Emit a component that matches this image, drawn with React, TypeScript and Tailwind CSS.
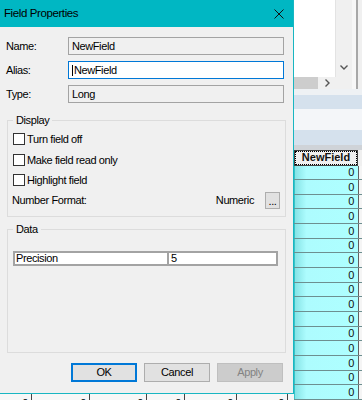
import React from "react";

const font = "font-['Liberation_Sans',Arial,sans-serif] text-[11px] tracking-[-0.4px] text-black";

const Checkbox = ({ label }: { label: string }) => (
  <div className="flex h-[20.5px] items-center">
    <div className="h-[12px] w-[12px] border border-[#333333] bg-white" />
    <span className="ml-[2px]">{label}</span>
  </div>
);

const FieldRow = ({ label, value, active }: { label: string; value: string; active?: boolean }) => (
  <div className="flex h-[18px] items-center">
    <div className="w-[68px] pl-[6px]">{label}</div>
    <div
      className={
        "flex h-[18px] w-[216px] items-center pl-[3px] " +
        (active ? "border border-[#0078d7] bg-white" : "border border-[#a3a3a3] bg-[#f0f0f0]")
      }
    >
      {active && <span className="mr-[1px] h-[11px] w-px bg-black" />}
      <span>{value}</span>
    </div>
  </div>
);

const rows = Array.from({ length: 16 });
const bottomCells = [32, 58, 57, 38, 52, 51];

export default function App() {
  return (
    <div className={"flex h-[400px] w-[362px] overflow-hidden bg-[#f0f0f0] " + font}>
      {/* left: dialog + table strip beneath */}
      <div className="flex w-[294px] flex-col">
        <div className="flex h-[394px] flex-col border-r border-b border-[#19b6c2] bg-[#f0f0f0]">
          <div className="flex h-[27px] shrink-0 items-center justify-between bg-[#00b7c3] pl-[4px] pr-[9px]">
            <span className="text-[11.5px]">Field Properties</span>
            <svg width="10" height="10" viewBox="0 0 10 10" aria-hidden>
              <path d="M0.5 0.5 L9.5 9.5 M9.5 0.5 L0.5 9.5" stroke="#111" strokeWidth="1" />
            </svg>
          </div>

          <div className="mt-[10px] flex flex-col gap-[6px]">
            <FieldRow label="Name:" value="NewField" />
            <FieldRow label="Alias:" value="NewField" active />
            <FieldRow label="Type:" value="Long" />
          </div>

          <fieldset className="mx-[7px] mt-[11px] border border-[#dcdcdc] px-[5px] pb-[7px]">
            <legend className="px-[3px] leading-[12px]">Display</legend>
            <div className="pt-[3px]">
              <Checkbox label="Turn field off" />
              <Checkbox label="Make field read only" />
              <Checkbox label="Highlight field" />
              <div className="mt-[1.5px] flex h-[17px] items-center">
                <span className="-ml-[1px] flex-1">Number Format:</span>
                <span className="mr-[11px]">Numeric</span>
                <div className="flex h-[17px] w-[15px] items-end justify-center border border-[#adadad] bg-[#e1e1e1] pb-[2px] leading-[10px]">
                  ...
                </div>
              </div>
            </div>
          </fieldset>

          <fieldset className="mx-[7px] mt-[6px] border border-[#dcdcdc] px-[5px] pb-[86px]">
            <legend className="px-[3px] leading-[12px]">Data</legend>
            <div className="mr-[2px] mt-[16px] flex h-[15px] border-2 border-[#a3a3a3] bg-white leading-[11px]">
              <div className="flex w-[154px] items-center border-r-2 border-[#a3a3a3] pl-[1px]">Precision</div>
              <div className="flex flex-1 items-center pl-[2px]">5</div>
            </div>
          </fieldset>

          <div className="mt-[10px] flex justify-end gap-[7px] pr-[10px]">
            <button className="flex h-[19px] w-[66px] items-center justify-center border-2 border-[#0078d7] bg-[#e1e1e1]">
              OK
            </button>
            <button className="flex h-[19px] w-[66px] items-center justify-center border border-[#adadad] bg-[#e1e1e1]">
              Cancel
            </button>
            <button className="flex h-[19px] w-[66px] items-center justify-center border border-[#bfbfbf] bg-[#cccccc] text-[#838383]">
              Apply
            </button>
          </div>
        </div>

        <div className="flex h-[6px] overflow-hidden bg-[#f7f7f7]">
          {bottomCells.map((w, i) => (
            <div key={i} className="flex justify-end border-r border-[#444444] pr-[3px] pt-[2px] leading-[14px]" style={{ width: w }}>
              0
            </div>
          ))}
          <div className="flex-1" />
        </div>
      </div>

      {/* right: attribute table behind the dialog */}
      <div className="flex w-[68px] flex-col bg-[#f0f0f0]">
        <div className="flex h-[89px]">
          <div className="flex w-[58px] flex-col">
            <div className="flex h-[77px]">
              <div className="w-[42px] border-r border-[#e3e3e3] bg-white" />
              <div className="flex w-[16px] items-end justify-center pb-[7px]">
                <svg width="8" height="5" viewBox="0 0 8 5" aria-hidden>
                  <path d="M0.5 0.5 L4 4 L7.5 0.5" stroke="#555" strokeWidth="1.4" fill="none" />
                </svg>
              </div>
            </div>
            <div className="flex h-[12px]">
              <div className="w-[24px] bg-[#cdcdcd]" />
              <div className="flex w-[18px] items-center justify-center">
                <svg width="5" height="8" viewBox="0 0 5 8" aria-hidden>
                  <path d="M0.5 0.5 L4 4 L0.5 7.5" stroke="#555" strokeWidth="1.4" fill="none" />
                </svg>
              </div>
              <div className="w-[16px]" />
            </div>
          </div>
          <div className="w-[4px] bg-[#f7f7f7]" />
          <div className="w-[2px] bg-[#a8a8a8]" />
          <div className="flex-1" />
        </div>
        <div className="h-[7px] bg-[#eef1f4]" />
        <div className="h-[17px] bg-[#d5e1ed]" />
        <div className="h-[24px] bg-[#f4f6f9]" />
        <div className="h-[18px] bg-[#d5e1ed]" />
        <div className="h-[5px] bg-[#cfd3d8]" />
        <div className="flex h-[16px]">
          <div className="w-[64px] border border-[#404040] bg-[#f0f0f0]">
            <div className="flex h-full items-center justify-center border border-dotted border-black text-[11px] font-bold tracking-normal text-[#111]">
              NewField
            </div>
          </div>
          <div className="flex-1 bg-[#f0f0f0]" />
        </div>
        {rows.map((_, i) => (
          <div key={i} className="flex h-[14.67px] shrink-0 border-b border-[#6d8f90]">
            <div className="flex w-[64px] items-center justify-end border-l border-[#38c4c8] bg-[linear-gradient(to_right,#86e3e6,#adfcfe_18%,#aeffff)] pr-[4px] text-[#111]">
              0
            </div>
            <div className="flex-1 border-l border-[#606060] bg-[#f5f5f5]" />
          </div>
        ))}
      </div>
    </div>
  );
}
